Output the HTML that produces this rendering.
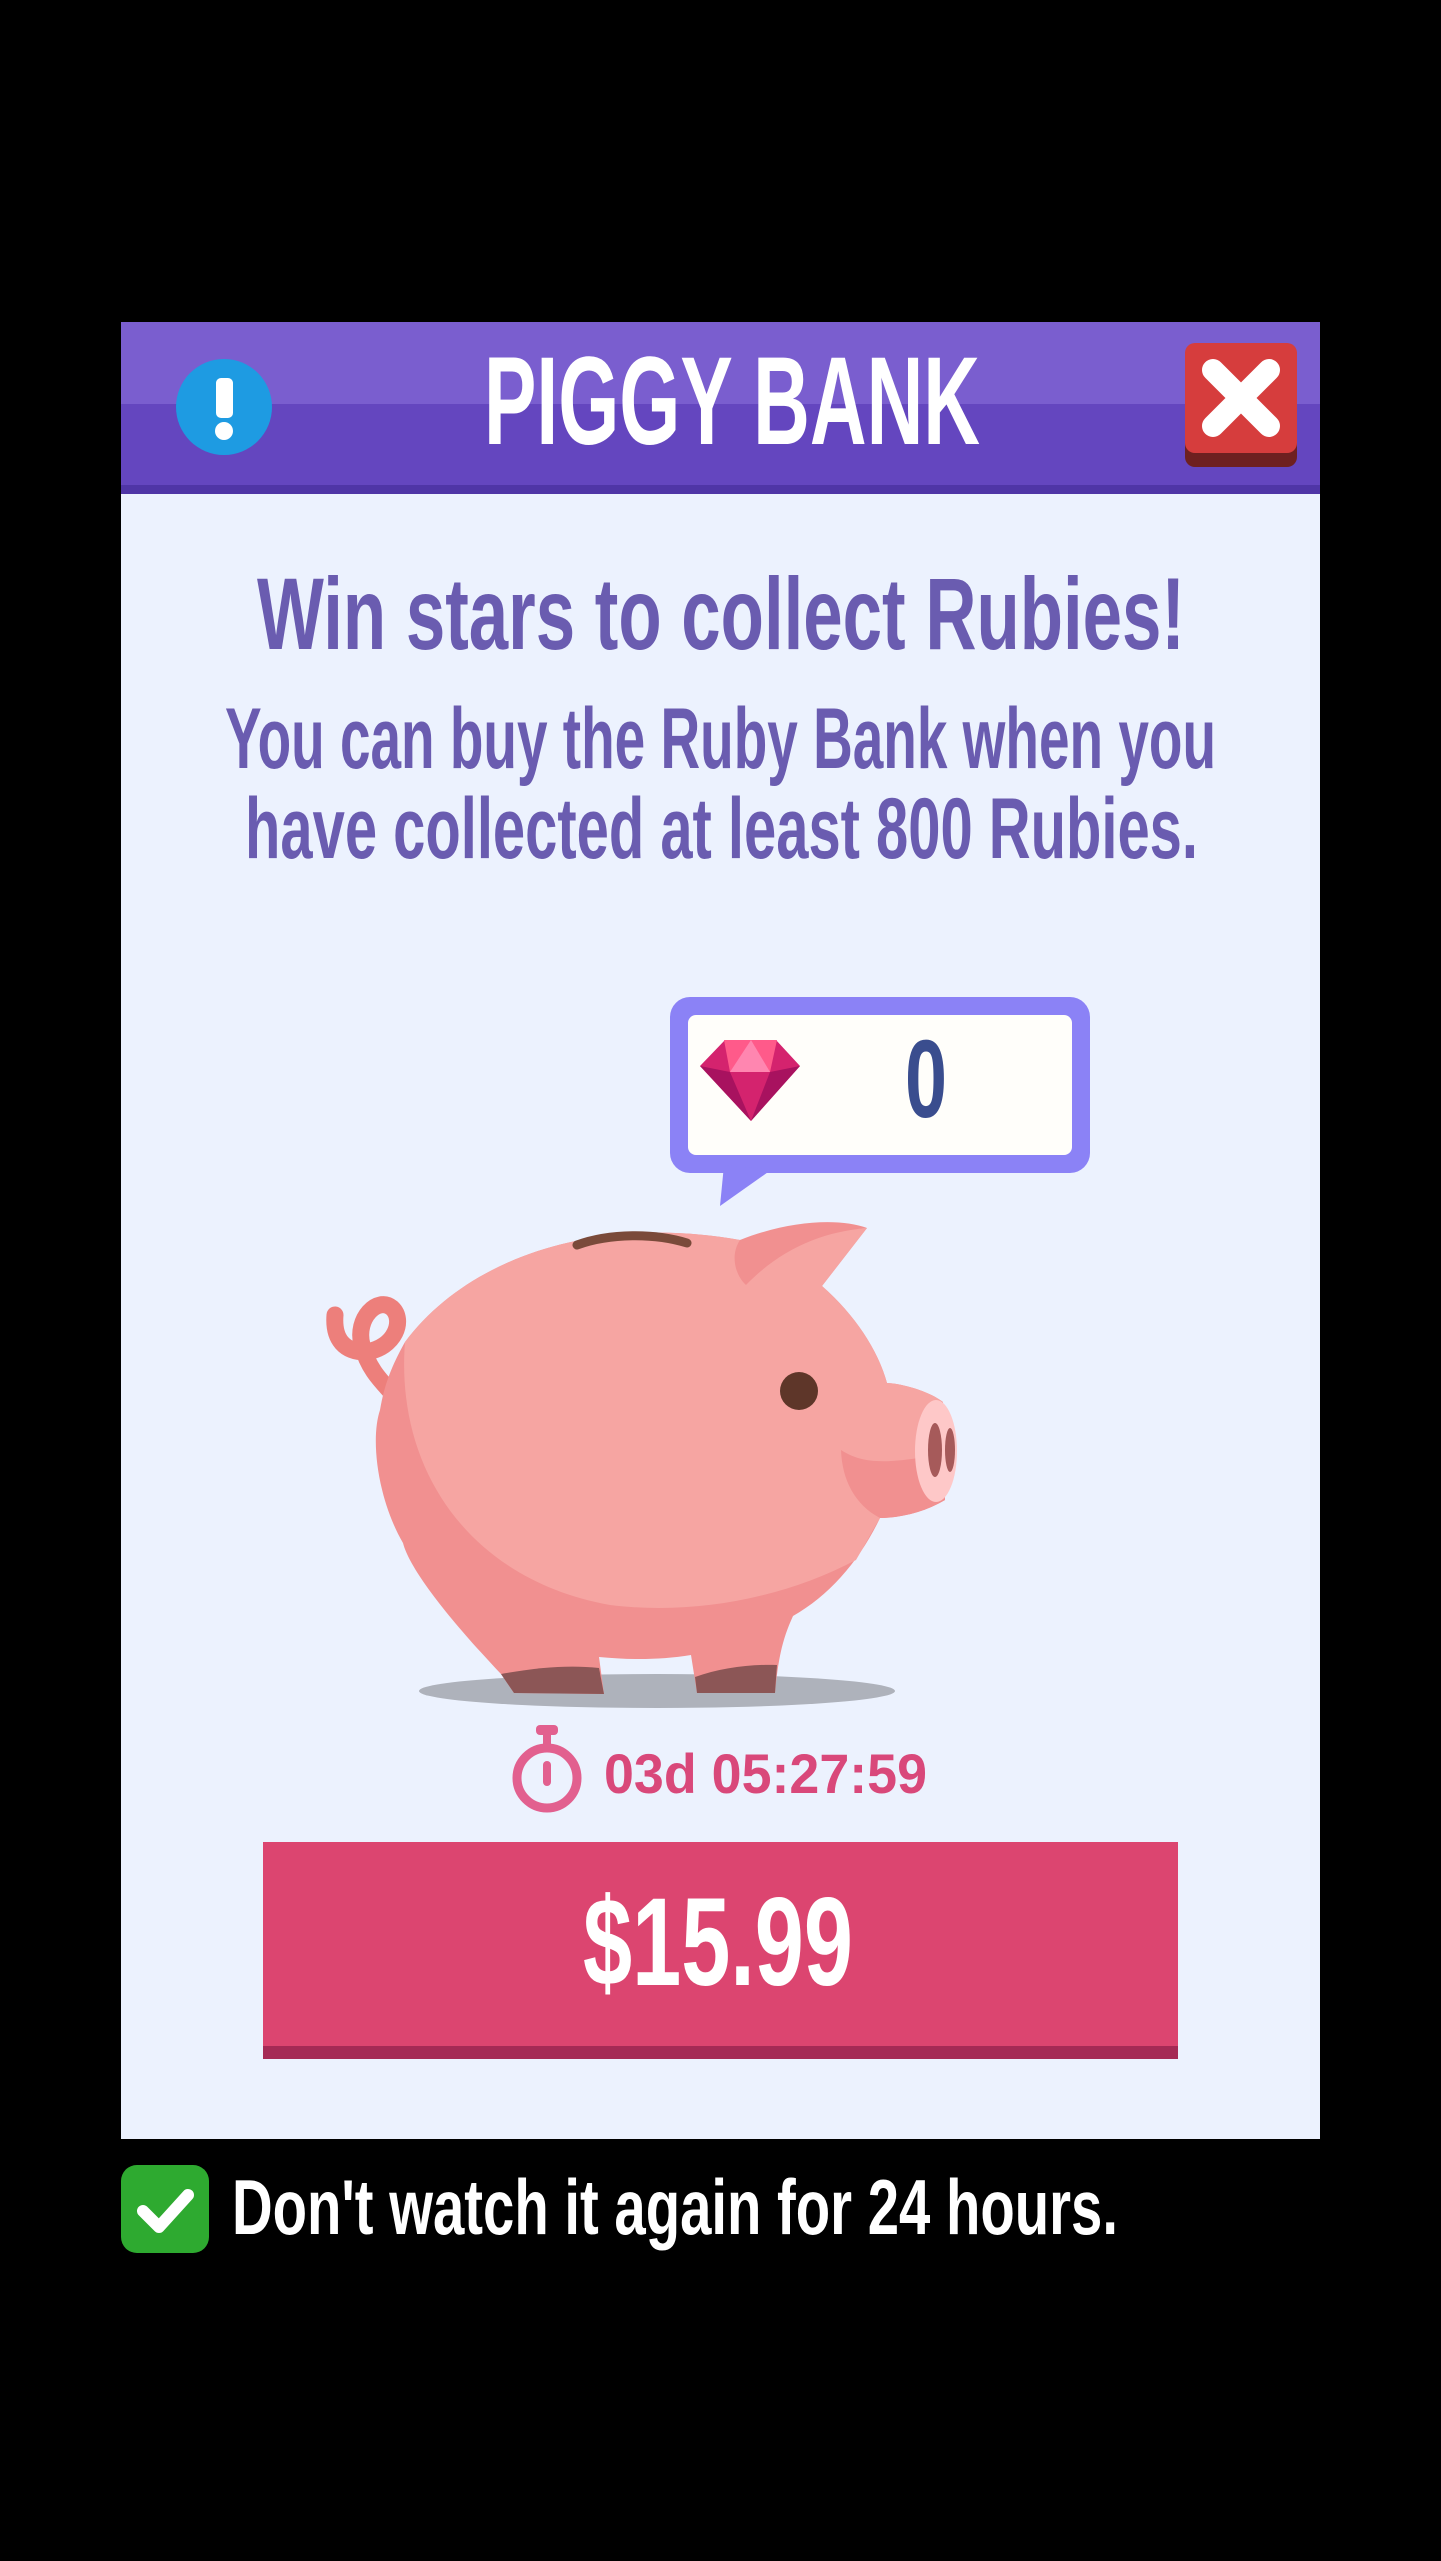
<!DOCTYPE html>
<html><head><meta charset="utf-8"><style>
html,body{margin:0;padding:0;background:#000;}
svg{display:block}
text{font-family:"Liberation Sans Narrow","Liberation Sans",sans-serif;font-weight:bold}
</style></head><body>
<svg width="1441" height="2561" viewBox="0 0 1441 2561" xmlns="http://www.w3.org/2000/svg">
<rect width="1441" height="2561" fill="#000"/>
<rect x="121" y="322" width="1199" height="1817" fill="#ecf2fe"/>
<rect x="121" y="322" width="1199" height="171" fill="#6446bf"/>
<rect x="121" y="322" width="1199" height="82" fill="#7a5ecf"/>
<rect x="121" y="485" width="1199" height="9" fill="#4f35a6"/>
<circle cx="224" cy="407" r="48" fill="#1e9be2"/>
<rect x="216" y="378" width="17" height="40" rx="5" fill="#fff"/>
<circle cx="224" cy="431" r="9" fill="#fff"/>
<text x="484" y="444" font-size="125" fill="#fff" textLength="496" lengthAdjust="spacingAndGlyphs">PIGGY BANK</text>
<rect x="1185" y="345" width="112" height="122" rx="10" fill="#6e2020"/>
<rect x="1185" y="343" width="112" height="110" rx="10" fill="#d63d3d"/>
<path d="M1213 370 L1269 426 M1269 370 L1213 426" stroke="#fff" stroke-width="22" stroke-linecap="round"/>
<text x="257" y="649" font-size="102" fill="#6a5cb0" textLength="928" lengthAdjust="spacingAndGlyphs">Win stars to collect Rubies!</text>
<text x="225" y="768" font-size="86" fill="#6a5cb0" textLength="991" lengthAdjust="spacingAndGlyphs">You can buy the Ruby Bank when you</text>
<text x="245" y="858" font-size="86" fill="#6a5cb0" textLength="953" lengthAdjust="spacingAndGlyphs">have collected at least 800 Rubies.</text>
<rect x="670" y="997" width="420" height="176" rx="20" fill="#8b82f6"/>
<path d="M724 1165 L720 1206 L771 1170 Z" fill="#8b82f6"/>
<rect x="688" y="1015" width="384" height="140" rx="8" fill="#fffefa"/>
<polygon points="700,1066 725,1040 776,1040 800,1066 751,1121" fill="#d4236e"/>
<polygon points="724,1040 777,1040 770,1072 730,1072" fill="#ff5a8a"/>
<polygon points="751,1040 770,1072 730,1072" fill="#ff86b0"/>
<polygon points="700,1066 730,1072 751,1121" fill="#a8125f"/>
<polygon points="800,1066 770,1072 751,1121" fill="#a8125f"/>
<text x="905" y="1117" font-size="110" fill="#3a4d8e" textLength="42" lengthAdjust="spacingAndGlyphs">0</text>
<ellipse cx="657" cy="1691" rx="238" ry="17" fill="#aeb2bb"/>
<path d="M335 1315 C333 1340 345 1352 366 1352 C395 1348 405 1320 392 1308 C378 1296 355 1318 362 1345 C368 1368 380 1380 392 1393" fill="none" stroke="#ed7f7b" stroke-width="17" stroke-linecap="round"/>
<path d="M405 1342 C470 1255 600 1215 740 1240 L867 1228 L822 1286 C855 1315 878 1350 887 1383 C905 1384 930 1392 943 1402 L945 1500 C925 1512 900 1518 880 1518 C860 1560 830 1595 793 1616 C782 1640 778 1660 775 1693 L697 1693 L691 1655 C660 1660 630 1660 599 1657 L604 1694 L514 1693 L501 1674 C450 1620 410 1570 403 1543 C378 1500 370 1440 380 1410 C385 1380 395 1360 405 1342 Z" fill="#f19090"/>
<path d="M405 1342 C470 1255 600 1215 740 1240 L867 1228 L822 1286 C855 1315 878 1350 887 1383 C905 1384 930 1392 943 1402 L940 1455 L880 1518 C870 1535 862 1550 856 1560 C780 1600 690 1615 610 1605 C470 1580 395 1470 405 1342 Z" fill="#f6a5a2"/>
<path d="M740 1240 C790 1220 840 1218 867 1228 C820 1232 780 1250 746 1285 C735 1275 730 1255 740 1240 Z" fill="#f19090"/>
<path d="M577 1245 C610 1233 655 1233 687 1243" fill="none" stroke="#7a4a3a" stroke-width="9" stroke-linecap="round"/>
<ellipse cx="799" cy="1391" rx="19" ry="19" fill="#5e3629"/>
<path d="M841 1450 C860 1462 880 1465 930 1456 L945 1500 C925 1512 900 1518 880 1518 C855 1505 842 1480 841 1450 Z" fill="#f19090"/>
<ellipse cx="936" cy="1451" rx="21" ry="51" fill="#fec8c8"/>
<ellipse cx="935" cy="1450" rx="7" ry="27" fill="#a65a5a"/>
<ellipse cx="950" cy="1450" rx="5" ry="22" fill="#a65a5a"/>
<path d="M501 1674 C540 1667 570 1665 599 1668 L604 1694 L514 1693 Z" fill="#8c5656"/>
<path d="M695 1677 C720 1668 750 1664 777 1665 L775 1693 L697 1693 Z" fill="#8c5656"/>
<circle cx="547" cy="1778" r="30" fill="none" stroke="#e2608f" stroke-width="9"/>
<rect x="536" y="1725" width="22" height="10" rx="4" fill="#e2608f"/>
<rect x="543" y="1733" width="8" height="12" fill="#e2608f"/>
<path d="M547 1765 L547 1782" stroke="#e2608f" stroke-width="8" stroke-linecap="round"/>
<text x="604" y="1793" font-size="56" fill="#d9487a" textLength="323" lengthAdjust="spacingAndGlyphs">03d  05:27:59</text>
<rect x="263" y="1842" width="915" height="217" fill="#dc4570"/>
<rect x="263" y="2046" width="915" height="13" fill="#a52a55"/>
<text x="583" y="1985" font-size="125" fill="#fff" textLength="270" lengthAdjust="spacingAndGlyphs">$15.99</text>
<rect x="121" y="2165" width="88" height="88" rx="16" fill="#2eaa30"/>
<path d="M143 2211 L159 2227 L188 2195" fill="none" stroke="#fff" stroke-width="12" stroke-linecap="round" stroke-linejoin="round"/>
<text x="232" y="2234" font-size="78" fill="#fff" textLength="886" lengthAdjust="spacingAndGlyphs">Don't watch it again for 24 hours.</text>
</svg>
</body></html>
